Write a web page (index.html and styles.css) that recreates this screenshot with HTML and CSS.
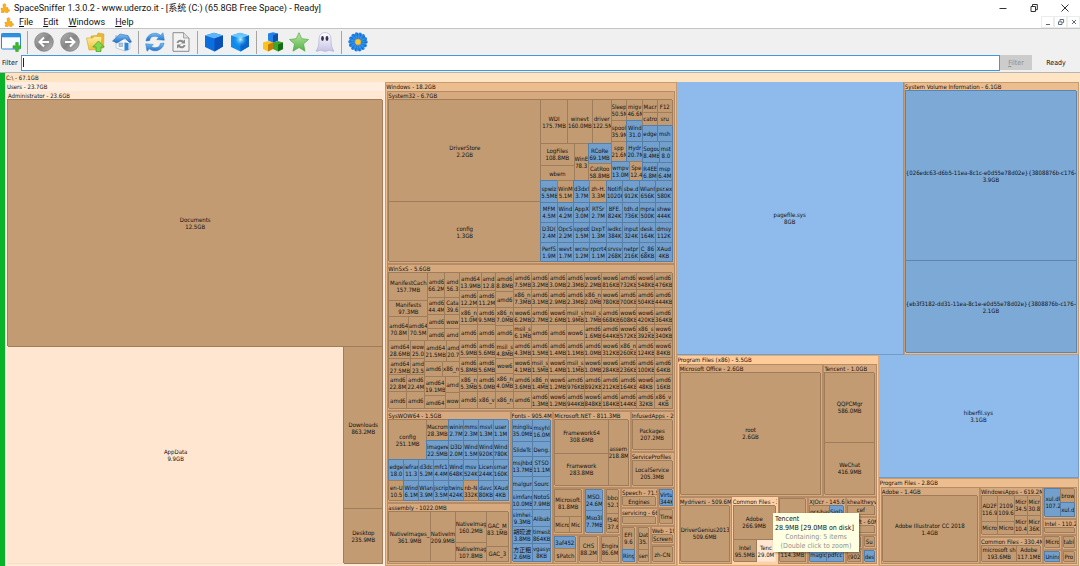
FILE: index.html
```html
<!DOCTYPE html>
<html lang="en">
  <head>
    <meta charset="UTF-8" />
    <title>SpaceSniffer</title>
    <link rel="stylesheet" href="styles.css">
  </head>
  <body>
    <svg class="defs" aria-hidden="true">
      <defs>
        <linearGradient id="gray" x1="0" y1="0" x2="1" y2="1">
          <stop offset="0" stop-color="#b5b5b5" /><stop offset="0.5" stop-color="#858585" /><stop offset="1" stop-color="#b8b8b8" />
        </linearGradient>
        <linearGradient id="gold" x1="0" y1="0" x2="0" y2="1">
          <stop offset="0" stop-color="#fff0a0" /><stop offset="1" stop-color="#efbf38" />
        </linearGradient>
        <linearGradient id="sky" x1="0" y1="0" x2="0" y2="1">
          <stop offset="0" stop-color="#7cc0f5" /><stop offset="1" stop-color="#1f6fd0" />
        </linearGradient>
        <linearGradient id="leaf" x1="0" y1="0" x2="0" y2="1">
          <stop offset="0" stop-color="#b9ea9c" /><stop offset="1" stop-color="#54b04a" />
        </linearGradient>
        <linearGradient id="mist" x1="0" y1="0" x2="0" y2="1">
          <stop offset="0" stop-color="#ffffff" /><stop offset="1" stop-color="#c6c2e6" />
        </linearGradient>
        <radialGradient id="glow">
          <stop offset="0" stop-color="#b8f6ff" /><stop offset="1" stop-color="#1f9df2" stop-opacity="0" />
        </radialGradient>
        <symbol id="puzzle" viewBox="0 0 10 10">
          <path d="M1 5.200h2.200c.6 0 .3-.8.1-1.300C2.700 2.200 3 .7 4.400.7s1.900 1.500 1.200 2.900c-.3.600-.2 1 .4 1h2v1.700c0 .6.400.5.800.3.900-.3 1.200 1.700.1 1.800-.7 0-1-.2-1 .4v.8H5.600c.3-1.400-1.700-1.500-1.500 0H1.300V7.800c1.200 0 1-1.400-.3-1.100z" fill="#f9b21e" stroke="#dd8b13" stroke-width=".5" />
        </symbol>
      </defs>
    </svg>

    <header class="titlebar">
      <svg class="app-icon"><use href="#puzzle" /></svg>
      <span class="caption">SpaceSniffer 1.3.0.2 - www.uderzo.it - [系统 (C:) (65.8GB Free Space) - Ready]</span>
      <div class="window-buttons">
        <button aria-label="Minimize"><svg viewBox="0 0 10 10"><path d="M1.500 5.500h7" /></svg></button>
        <button aria-label="Restore"><svg viewBox="0 0 10 10"><path d="M2 3.500h4.500V8.500H2zM3.500 3V1.500h4.800v5.200H7" /></svg></button>
        <button aria-label="Close"><svg viewBox="0 0 10 10"><path d="M1.500 1.500l7 7M8.500 1.500l-7 7" /></svg></button>
      </div>
    </header>

    <nav class="menubar">
      <svg class="app-icon"><use href="#puzzle" /></svg>
      <button><u>F</u>ile</button>
      <button><u>E</u>dit</button>
      <button><u>W</u>indows</button>
      <button><u>H</u>elp</button>
      <div class="child-buttons">
        <button aria-label="Minimize view"><svg viewBox="0 0 10 10"><path d="M3 7.500h4" /></svg></button>
        <button aria-label="Restore view"><svg viewBox="0 0 10 10"><path d="M2.500 4.800h3.500v2.700H2.500zM4 4V2.500h3.600v3H6.500" /></svg></button>
        <button aria-label="Close view"><svg viewBox="0 0 10 10"><path d="M3 3l4 4M7 3l-4 4" /></svg></button>
      </div>
    </nav>

    <div class="toolbar">
      <button aria-label="New view">
        <svg viewBox="0 0 20 20"><rect x=".5" y="1.500" width="19" height="15.500" rx="1" fill="#f8fbff" stroke="#2c86d6" /><path d="M.5 1.500h19v3.800H.5z" fill="#2f8fe0" /><path d="M14.700 10.500h2.600v3.200h2.700v2.600h-2.700v3.200h-2.600v-3.200h-2.700v-2.600h2.700z" fill="#3dbb2d" stroke="#22901b" stroke-width=".5" /></svg>
      </button>
      <span class="sep"></span>
      <button aria-label="Back">
        <svg viewBox="0 0 20 20"><circle cx="10" cy="10" r="9.300" fill="url(#gray)" stroke="#777" stroke-width=".7" /><path d="M15 10H6M10 5.500L5.500 10l4.500 4.500" fill="none" stroke="#fff" stroke-width="2" /></svg>
      </button>
      <button aria-label="Forward">
        <svg viewBox="0 0 20 20"><circle cx="10" cy="10" r="9.300" fill="url(#gray)" stroke="#777" stroke-width=".7" /><path d="M5 10h9M10 5.500l4.500 4.500-4.500 4.500" fill="none" stroke="#fff" stroke-width="2" /></svg>
      </button>
      <button aria-label="Parent folder">
        <svg viewBox="0 0 20 20"><path d="M5 4l6-.5 1-2.500 6 1-.5 14L5 17z" fill="#e9b933" stroke="#c99a28" stroke-width=".5" /><path d="M.5 6l6 0 2-1.800 7.500.6-1.500 12.500L3 18z" fill="url(#gold)" stroke="#d2a42f" stroke-width=".6" /><path d="M12.500 9l5.800 6h-3.300v4.500H10V15H6.700z" fill="#83d84b" stroke="#3d9c2c" stroke-width=".7" /></svg>
      </button>
      <button aria-label="Home">
        <svg viewBox="0 0 20 20"><path d="M4 9l8-2 6 3v7l-5 2-9-3z" fill="#f4f6fa" stroke="#9aa9ba" stroke-width=".5" /><path d="M3 3h2.500v4H3z" fill="#c5d2de" /><path d="M.5 9L8 2l8 1.500 3.500 6.500-2 .5-4.500-4.500-8 5z" fill="url(#sky)" stroke="#275f9d" stroke-width=".5" /><path d="M12.500 10.500l4 .5v7l-4 .7z" fill="#2f85d8" /><path d="M7 11h3.500v3.500H7z" fill="#a5cdf0" stroke="#587a9b" stroke-width=".4" /></svg>
      </button>
      <span class="sep"></span>
      <button aria-label="Rescan">
        <svg viewBox="0 0 20 20"><path d="M1 9C1.500 2.500 10-1.500 15.500 3.200L18 .8l1.300 7.400-7.600-.6 2.100-2.100C9.500 2.800 4.500 5 4.800 8.500z" fill="url(#sky)" stroke="#2a78bd" stroke-width=".5" /><path d="M19 11c-.5 6.500-9 10.500-14.500 5.800L2 19.200.7 11.800l7.600.6-2.100 2.100C10.500 17.200 15.500 15 15.200 11.500z" fill="url(#sky)" stroke="#2a78bd" stroke-width=".5" /></svg>
      </button>
      <button aria-label="Rescan this folder">
        <svg viewBox="0 0 20 20"><path d="M2 .7h10.500L18 6v13.300H2z" fill="#f3f3f3" stroke="#8c8c8c" /><path d="M12.500.7V6H18" fill="#ddd" stroke="#8c8c8c" stroke-width=".7" /><path d="M5.500 11c.8-3.500 4.500-4.300 6.800-2.200L14 7.500v4h-4l1-1.300c-1.500-1-3.200-.5-3.500.8zM14.500 13c-.8 3.500-4.500 4.300-6.800 2.200L6 16.500v-4h4l-1 1.300c1.500 1 3.200.5 3.500-.8z" fill="#8a8a8a" /></svg>
      </button>
      <span class="sep"></span>
      <button aria-label="Less detail">
        <svg viewBox="0 0 20 20"><path d="M1 3.500L10 .8l9 2.700v11L10.500 19.500 1 15z" fill="#0c6edc" /><path d="M1 3.500L10 .8l9 2.700-8.500 3z" fill="#5db5fa" /><path d="M10.500 6.500L19 3.500v11l-8.500 5z" fill="#0a50b9" /></svg>
      </button>
      <button aria-label="More detail">
        <svg viewBox="0 0 20 20"><path d="M1 3.500L10 .8l9 2.700v11L10.500 19.500 1 15z" fill="#118be9" /><path d="M1 3.500L10 .8l9 2.700-8.500 3z" fill="#73cbfc" /><path d="M10.500 6.500L19 3.500v11l-8.500 5z" fill="#0864cc" /><circle cx="10.500" cy="7.500" r="7" fill="url(#glow)" /></svg>
      </button>
      <span class="sep"></span>
      <button aria-label="File classes">
        <svg viewBox="0 0 20 20"><path d="M5 1.500l5-1.300 5 1.300v7l-5 2.300-5-2.300z" fill="#2382e6" /><path d="M10 3.200l5-1.700v7l-5 2.300z" fill="#0d51ae" /><path d="M0 10.500L5 9l5 1.500v6.500l-5 2.500-5-2.500z" fill="#f9c320" /><path d="M5 12.500l5-2v6.500l-5 2.500z" fill="#c27e09" /><path d="M10 10.500L15 9l5 1.500v6.500l-5 2.500-5-2.500z" fill="#3ea72c" /><path d="M15 12.500l5-2v6.500l-5 2.500z" fill="#146d15" /></svg>
      </button>
      <button aria-label="Favourites">
        <svg viewBox="0 0 20 20"><path d="M10 .7l2.800 6 6.700.8-5 4.500 1.500 7.200-6-3.700-6 3.700L5.500 12l-5-4.500 6.700-.8z" fill="url(#leaf)" stroke="#57a64c" stroke-width=".7" /></svg>
      </button>
      <button aria-label="Show hidden">
        <svg viewBox="0 0 20 20"><path d="M4 8C4 3 6 .7 10 .7S16 3 16 8c0 5 1 9 3 11-2 .7-3-.7-4.500-.7S12 19.500 10 19.300s-3-1-4.500-1S2.500 20 1 19c2-2.500 3-6 3-11z" fill="url(#mist)" stroke="#aaa5cf" stroke-width=".6" /><ellipse cx="7.500" cy="6.500" rx="1.400" ry="2.400" fill="#37324d" /><ellipse cx="12" cy="6.500" rx="1.400" ry="2.400" fill="#37324d" /></svg>
      </button>
      <span class="sep"></span>
      <button aria-label="About">
        <svg viewBox="0 0 20 20"><circle cx="10" cy="10" r="8" fill="#2f93ee" /><circle cx="10" cy="10" r="8" fill="none" stroke="#2585e4" stroke-width="3.600" stroke-linecap="round" stroke-dasharray="0 3.590" /><circle cx="10" cy="10" r="6" fill="none" stroke="#1263c4" stroke-width="6" stroke-dasharray=".5 2.190" /><circle cx="10" cy="10" r="2.900" fill="#ffc629" stroke="#e29a16" stroke-width=".5" /></svg>
      </button>
    </div>

    <form class="filterbar">
      <label for="filter">Filter</label>
      <input type="text" id="filter" autofocus />
      <button type="button" disabled><u>F</u>ilter</button>
      <span class="status">Ready</span>
    </form>

    <main class="view">
      <div class="progress"></div>
      <div class="map" id="map"></div>
      <div class="tip">
        <div>Tencent</div>
        <div>28.9MB [29.0MB on disk]</div>
        <div class="hint">Containing: 5 items</div>
        <div class="hint">(Double click to zoom)</div>
      </div>
    </main>
    <script src="script.js"></script>
  </body>
</html>
```
FILE: styles.css
```css
body {
  margin: 0;
  height: 100vh;
  display: flex;
  flex-direction: column;
  overflow: hidden;
  background: #fff;
  color: #111;
  font-family: Roboto, "Noto Sans CJK SC", sans-serif;
  font-size: 9px;
}
button {
  background: none;
  border: none;
  padding: 0;
  font: inherit;
  color: inherit;
}
.defs {
  position: absolute;
  width: 0;
  height: 0;
}
.titlebar, .menubar {
  display: flex;
  align-items: center;
  flex: none;
}
.titlebar {
  height: 15px;
}
.menubar {
  height: 13px;
  padding-left: 4px;
  border-bottom: 1px solid #c4c4c4;
}
.menubar > button {
  margin-right: 10px;
}
.app-icon {
  width: 10px;
  height: 10px;
}
.titlebar .app-icon {
  margin-right: 4px;
}
.menubar .app-icon {
  margin-right: 5px;
}
.window-buttons, .child-buttons {
  display: flex;
  margin-left: auto;
}
.window-buttons button {
  width: 31px;
  height: 15px;
}
.window-buttons svg, .child-buttons svg {
  width: 10px;
  height: 10px;
  display: block;
  margin: auto;
  fill: none;
  stroke: #333;
}
.child-buttons button {
  width: 13px;
  height: 12px;
  border: 1px solid #ececec;
}
.child-buttons svg {
  stroke: #5b6b7c;
}
.toolbar {
  display: flex;
  align-items: center;
  flex: none;
  height: 26px;
  margin-left: -2px;
  background: #f0f0f0;
}
.toolbar button {
  width: 26px;
  height: 20px;
}
.toolbar svg {
  width: 20px;
  height: 20px;
  display: block;
  margin: auto;
}
.toolbar .sep {
  width: 1px;
  height: 23px;
  margin: 0 3px;
  background: #a5a5a5;
}
.filterbar {
  display: flex;
  align-items: stretch;
  flex: none;
  height: 16px;
  padding-bottom: 1px;
  background: #f0f0f0;
  border-bottom: 1px solid #b5b5b5;
  font-family: "DejaVu Sans Condensed", "DejaVu Sans", sans-serif;
  font-size: 7px;
  line-height: 16px;
}
.filterbar label {
  width: 19px;
  padding-left: 2px;
}
.filterbar input {
  flex: 1;
  min-width: 0;
  border: 1px solid #4298dc;
  padding: 0 1px;
  outline: none;
  font-size: 9px;
  caret-color: transparent;
  background: linear-gradient(#222, #222) 1px 2px / 1px 9px no-repeat #fff;
}
.filterbar button {
  width: 32px;
  margin-bottom: 1px;
  background: #ccc;
  color: #8f8f8f;
}
.filterbar .status {
  width: 48px;
  text-align: center;
}
.view {
  position: relative;
  display: flex;
  flex: 1;
  min-height: 0;
}
.progress {
  width: 5px;
  background: #08b32a;
}
.map {
  flex: 1;
  min-width: 0;
  display: grid;
  font-family: "DejaVu Sans Condensed", "DejaVu Sans", "Noto Sans CJK SC", sans-serif;
  font-size: 6px;
  line-height: 7px;
}
.split {
  display: grid;
  min-width: 0;
  min-height: 0;
}
.folder {
  display: flex;
  flex-direction: column;
  min-width: 0;
  min-height: 0;
  box-sizing: border-box;
  overflow: hidden;
  background: #d7a97e;
  border: 1px solid #b58c65;
}
.folder > .title {
  flex: none;
  height: 8px;
  line-height: 8px;
  white-space: nowrap;
  overflow: hidden;
}
.folder > .split {
  flex: 1;
  padding: 0 1px 1px 1px;
}
.group > .split {
  padding-top: 1px;
}
.root, .user, .admin { border: none; }
.root { background: #ffe4c4; }
.user { background: #ffeedf; }
.admin { background: #ffe7d2; }
.root > .title, .user > .title, .admin > .title {
  height: 9px;
  line-height: 9px;
  padding-left: 1px;
}
.root > .split { padding-bottom: 0; }
.windows { background: #ebbd8f; border-color: #c69b70; }
.program { background: #ffcb99; border-color: #dbab7d; }
.hover { background: #ffd0a3; border-color: #ffd0a3; }
.tile {
  display: flex;
  flex-direction: column;
  justify-content: center;
  min-width: 0;
  min-height: 0;
  box-sizing: border-box;
  overflow: hidden;
  text-align: center;
  background: #c39b72;
  border: solid #a07d5a;
  border-width: 0 1px 1px 0;
  box-shadow: -1px -1px 0 #a07d5a;
}
.tile > div {
  white-space: nowrap;
  flex: none;
  min-height: 7px;
}
.file { background: #729fcc; border-color: #557fa8; box-shadow: -1px -1px 0 #557fa8; }
.big { background: #8ebbeb; border-color: #719cca; box-shadow: none; }
.volume { background: #7da9d7; border-color: #5c84ae; box-shadow: -1px -1px 0 #5c84ae; }
.open { background: #ffe6d0; border-color: #f8dfc8; box-shadow: none; }
.tip {
  position: absolute;
  right: 221px;
  bottom: 14px;
  width: 86px;
  height: 39px;
  box-sizing: border-box;
  padding: 2px;
  background: #ffffe1;
  box-shadow: 1px 1px 2px rgba(0,0,0,0.4);
  font-family: "DejaVu Sans Condensed", "DejaVu Sans", sans-serif;
  font-size: 7px;
  line-height: 9px;
  white-space: nowrap;
}
.tip .hint {
  color: #929292;
  text-align: center;
}
```
FILE: script.js
```js
// A node is { weight, dir, kids } for a split, plus title for a folder.
// Weights are relative to the siblings in the same split.
function tile(weight, name, size, kind) {
  return { weight, name, size, kind: kind || "" };
}
function file(weight, name, size) {
  return tile(weight, name, size, "file");
}
function row(weight, ...kids) {
  return { weight, dir: "columns", kids };
}
function col(weight, ...kids) {
  return { weight, dir: "rows", kids };
}
function folder(weight, title, inner, kind) {
  return { weight, title, kids: [inner], dir: "rows", kind: kind || "" };
}
// "name|size, *name|size": a star marks a file, equal weights unless given
function cells(weight, text, weights) {
  const kids = text.split(",").map((part, i) => {
    const [name, size] = part.trim().split("|");
    const w = weights ? weights[i] : 1;
    return name[0] === "*" ? file(w, name.slice(1), size) : tile(w, name, size);
  });
  return row(weight, ...kids);
}
function stack(weight, text, weights) {
  return { ...cells(weight, text, weights), dir: "rows" };
}

const system32 = folder(174, "System32 - 6.7GB", row(1,
  stack(460, "DriverStore|2.2GB, config|1.3GB", [310, 182]),
  col(398,
    row(247,
      col(213,
        cells(134, "WDI|175.7MB, winevt|160.0MB, driver|122.5MB", [81, 75, 57]),
        row(113,
          stack(101, "LogFiles|108.8MB, wbem", [65, 48]),
          tile(43, "WinE", "78.3"),
          stack(69, "*RCoRe|69.1MB, CatRoo|58.8MB", [61, 52])
        )
      ),
      col(96,
        cells(64, "Sleep|50.5M, migv|46.6M"),
        cells(62, "spool|35.9M, *Wind|31.0"),
        cells(61, "spp|21.6M, *Hydr|20.7M"),
        cells(60, "*wmpv|13.0M, Spe|12.4", [57, 39])
      ),
      col(89,
        cells(40, "Macr, F12"),
        cells(38, "catro, sru"),
        cells(48, "*edge, *msh"),
        cells(66, "*Sogou|8.4MB, *mst|8.0", [51, 38]),
        cells(55, "*R4EE|6.8MB, *msp|6.4M")
      )
    ),
    cells(65, "*spwiz|5.5MB, WinM|5.1M, *d3dx9|3.7M, zh-H.|3.3M, *Notifi|1020K, *sbe.d|912K, *WlanI|656K, *psr.ex|580K"),
    cells(61, "*MFM|4.5M, *Wind|4.2M, *AppX|3.0M, *RTSr|2.7M, *BFE.|824K, *tdh.d|736K, *mpra|500K, *shwe|444K"),
    cells(60, "*D3D(|2.4M, *OpcS|2.2M, *sppob|1.5M, *DxpT|1.3M, *iedkc|384K, *input|324K, *desk.|164K, *dmsy|112K"),
    cells(59, "*PerfS|1.9M, *wevt|1.7M, *wcnv|1.2M, *rpcrt4|1.1M, *srvsv|268K, *netpr|216K, *C_86|68KB, *XAud|4KB")
  )
));

const winsxs = folder(147, "WinSxS - 5.6GB", col(1,
  row(206,
    col(118,
      tile(83, "ManifestCach", "157.7MB"),
      tile(50, "Manifests", "97.3MB"),
      cells(73, "amd64|70.8M, amd64|70.5M")
    ),
    col(97,
      cells(76, "amd6|66.2M, amd|56.3", [52, 45]),
      cells(52, "amd6|44.4M, Cata|39.6", [52, 45]),
      cells(41, "amd6, wow", [52, 45]),
      cells(37, "amd6, amd", [52, 45])
    ),
    col(109,
      cells(54, "amd64|13.9MB, amd|12.8", [65, 44]),
      cells(52, "amd6|12.2M, amd6|11.2M"),
      cells(50, "x86_n|11.0M, amd6|9.5MB"),
      cells(50, "amd6, amd6")
    ),
    stack(54, "amd6|8.8MB, amd6, x86_n|7.0MB, amd6", [57, 49, 53, 47]),
    col(480,
      cells(52, "amd6|7.5MB, amd6|3.2MB, amd6|3.0MB, amd6|2.3MB, wow6|2.2MB, wow6|816KB, amd6|732KB, wow6|548KB, amd6|476KB"),
      cells(52, "x86_n|7.3MB, amd6|3.1MB, amd6|2.9MB, amd6|2.3MB, x86_n|2.0MB, wow6|780KB, amd6|700KB, amd6|504KB, amd6|444KB"),
      cells(52, "wow6|6.2MB, amd6|2.7MB, wow6|2.6MB, msil_s|1.9MB, msil_s|1.7MB, amd6|668KB, wow6|608KB, wow6|420KB, amd6|364KB"),
      cells(50, "msil_s|6.1MB, amd6, amd6, wow6, amd6|1.6MB, amd6|644KB, wow6|572KB, x86_s|392KB, wow6|340KB")
    )
  ),
  row(205,
    col(109,
      cells(54, "amd64|28.6MB, wow|25.0", [67, 42]),
      cells(50, "amd64|27.5MB, amd|23.5", [67, 42]),
      cells(52, "amd6|22.8M, amd6|22.4M"),
      cells(49, "amd6, amd6")
    ),
    col(106,
      cells(62, "amd64|21.5MB, amd|20.7", [66, 40]),
      cells(47, "amd6, x86_n"),
      row(96,
        stack(62, "amd64|19.1MB, amd64", [59, 37]),
        stack(44, "amd, wow")
      )
    ),
    col(109,
      cells(51, "amd6|5.9MB, amd6|5.6MB"),
      cells(51, "amd6|5.8MB, amd6|5.6MB"),
      cells(52, "x86_n|5.3MB, amd6|5.0MB"),
      cells(51, "amd6, x86_v")
    ),
    stack(54, "msil_s|4.8MB, wow6, x86_n|4.0MB, x86_n", [54, 46, 54, 51]),
    col(480,
      cells(51, "amd6|4.3MB, amd6|1.5MB, amd6|1.4MB, amd6|1.1MB, amd6|1.0MB, wow6|312KB, x86_n|260KB, amd6|124KB, wow6|84KB"),
      cells(51, "wow6|4.1MB, msil_s|1.5MB, wow6|1.4MB, msil_s|1.1MB, wow6|1.0MB, wow6|284KB, amd6|236KB, amd6|100KB, amd6|64KB"),
      cells(52, "amd6|3.6MB, x86_n|1.4MB, wow6|1.2MB, amd6|976KB, amd6|892KB, amd6|212KB, amd6|164KB, wow6|48KB, amd6|16KB"),
      cells(51, "amd6, amd6|1.3MB, wow6|1.2MB, amd6|944KB, wow6|848KB, amd6|184KB, amd6|144KB, amd6|32KB, x86_v|4KB")
    )
  )
));

const syswow = folder(93, "SysWOW64 - 1.5GB", col(1,
  row(125,
    tile(115, "config", "251.1MB"),
    stack(68, "Macrom|28.3MB, *imagere|22.5MB", [65, 60]),
    col(182,
      cells(65, "*winin|2.7M, *mms|2.3M, *msvl|1.3M, *user|1.1M"),
      cells(60, "*D3D|2.0M, *Wind|1.5M, *Wind|920K, *Wind|780K")
    )
  ),
  cells(64, "*edge|18.0, *iefran|11.3, *d3dc|5.2M, *mfc1|4.4M, *Wind|648K, *msv|524K, *Licen|244K, *smar|160K"),
  cells(61, "en-U|10.5, *Wind|6.1M, *Wlan|3.9M, *jscrip|3.5M, *twinu|424K, nb-N|332K, *davc|80KB, *XAud|4KB")
));

const assembly = folder(61, "assembly - 1022.0MB", row(1,
  tile(127, "NativeImages_", "361.9MB"),
  tile(76, "NativeIm", "209.9MB"),
  stack(96, "NativeImag|160.2MB, NativeImag|107.8MB", [93, 59]),
  stack(66, "GAC_M|83.1MB, GAC_3", [106, 46])
));

const fonts = folder(43, "Fonts - 905.4MB", row(1,
  stack(64, "*mingliu|35.0MB, *SlideTc, *msjhbd|13.7MB, *malgun, *simfang|10.0MB, *simhei.|9.3MB, *胡晓波|3.8MB, *方正粗|2.6MB", [67, 47, 58, 45, 55, 52, 53, 53]),
  stack(58, "*msyhl|16.0M, *Deng., *STSO|11.1M, *Sourc, *NotoS|7.9MB, *Alibab, *timesb|864KB, *vgasys|8KB", [69, 45, 58, 45, 57, 50, 51, 55])
));

const windowsRest = col(122,
  row(230,
    folder(232, "Microsoft.NET - 811.3MB", row(1,
      stack(163, "Framework64|308.6MB, Framework|283.8MB", [104, 96]),
      tile(61, "assem", "218.8M")
    )),
    col(132,
      folder(124, "InfusedApps - 207.2MB", tile(1, "Packages", "207.2MB")),
      folder(106, "ServiceProfiles", tile(1, "LocalService", "205.3MB"))
    )
  ),
  row(228,
    col(203,
      row(140,
        folder(92, "", col(1, tile(83, "Microsoft.", "81.8MB"), cells(49, "Micro, Mic", [47, 37]))),
        folder(64, "", stack(1, "*MSO.|24.6M, *Mso3l|7.7MB")),
        folder(47, "", stack(1, "bbcc|52.1, f54C|37.6", [75, 57]))
      ),
      row(88,
        folder(75, "", stack(1, "*3af452., $Patch")),
        folder(64, "", tile(1, "CHS", "88.2M")),
        folder(64, "", tile(1, "Engine", "86.6M"))
      )
    ),
    col(161,
      row(114,
        col(111,
          folder(62, "Speech - 71.5MB", tile(1, "Engines")),
          folder(52, "servicing - 66MB", tile(1, ""))
        ),
        col(50,
          folder(62, "", file(1, "Virtu", "344K")),
          folder(52, "", tile(1, "Time"))
        )
      ),
      row(114,
        folder(47, "", stack(1, "EFI|9.6, *Ring", [70, 38])),
        folder(43, "", stack(1, "Dat|35., serv", [70, 38])),
        col(71,
          folder(58, "Web - 19MB", tile(1, "Screen")),
          folder(56, "", tile(1, "zh-CN"))
        )
      )
    )
  )
);

const windows = folder(291, "Windows - 18.2GB", col(1,
  system32,
  winsxs,
  row(154, col(124, syswow, assembly), fonts, windowsRest)
), "windows");

const users = folder(379, "Users - 23.7GB", folder(1, "Administrator - 23.6GB", col(1,
  tile(247, "Documents", "12.5GB"),
  row(217,
    tile(336, "AppData", "9.9GB", "open"),
    stack(39, "Downloads|863.2MB, Desktop|235.9MB", [162, 55])
  )
), "admin"), "user");

const programX86 = folder(202, "Program Files (x86) - 5.5GB", col(1,
  row(400,
    folder(437, "Microsoft Office - 2.6GB", tile(1, "root", "2.6GB")),
    folder(161, "Tencent - 1.0GB", stack(1, "QQPCMgr|586.0MB, WeChat|416.9MB", [212, 158]))
  ),
  row(203,
    folder(160, "Mydrivers - 509.6MB", tile(1, "DriverGenius2013", "509.6MB")),
    folder(139, "Common Files - 391MB", col(1,
      tile(105, "Adobe", "266.9MB"),
      row(67, tile(72, "Intel", "95.5MB"), tile(57, "Tenc", "29.0M", "open"))
    ), "hover"),
    folder(92, "", col(1, tile(126, ""), tile(67, "", "114.3MB"))),
    folder(114, "XJOcr - 145.6MB", col(1,
      cells(40, "ocr-bas, *SigD", [61, 45]),
      cells(92, ", *"),
      cells(40, "*magicl, *pdfcc")
    )),
    col(93,
      folder(62, "khealtheyv", tile(1, "cef")),
      folder(55, "&Soft - 60MB", tile(1, "")),
      row(42, folder(50, "", tile(1, "c")), folder(42, "", tile(1, "Su"))),
      row(44, folder(50, "", tile(1, "(902")), folder(42, "", file(1, "desl")))
    )
  )
), "program");

const programFiles = folder(88, "Program Files - 2.8GB", row(1,
  folder(298, "Adobe - 1.4GB", tile(1, "Adobe Illustrator CC 2018", "1.4GB")),
  col(191,
    folder(152, "WindowsApps - 619.2MB", row(1,
      col(101, cells(84, "AD2F|116.9, 2109|109.6"), cells(40, "Micro, Micro")),
      col(82, cells(64, "Micr|34.5, Micr|30.8"), cells(60, "Micr|10.4, Micr|36K"))
    )),
    folder(84, "Common Files - 330.4MB", cells(1, "microsoft sh|193.6MB, Adobe|117.1MB", [109, 74]))
  ),
  col(101,
    folder(97, "", row(1, file(49, "xul.dl", "107.2"), stack(43, "brow, *xul.d"))),
    folder(51, "Intel - 110.2MB", tile(1, "")),
    row(44, folder(53, "", tile(1, "Micro")), folder(45, "", tile(1, "tabl"))),
    row(44, folder(53, "", file(1, "Unins")), folder(45, "", tile(1, "Pro")))
  )
), "windows");

const volume = "-e0d55e78d02e}{3808876b-c176-4e48-b7ae-04046e6cc752}";
const drive = folder(1, "C:\\ - 67.1GB", row(1,
  users,
  windows,
  col(402,
    row(273,
      tile(227, "pagefile.sys", "8GB", "big"),
      folder(175, "System Volume Information - 6.1GB", col(1,
        tile(170, "{026edc63-d6b5-11ea-8c1c" + volume, "3.9GB", "volume"),
        tile(92, "{eb3f3182-dd31-11ea-8c1e" + volume, "2.1GB", "volume")
      ), "windows")
    ),
    row(211,
      programX86,
      col(200, tile(123, "hiberfil.sys", "3.1GB", "big"), programFiles)
    )
  )
), "root");

function div(className, text) {
  const el = document.createElement("div");
  el.className = className;
  if (text) el.textContent = text;
  return el;
}

function build(node) {
  if (!node.kids) {
    const el = div("tile " + node.kind);
    if (node.name || node.size) el.append(div("name", node.name));
    if (node.size) el.append(div("size", node.size));
    return el;
  }
  const split = div("split");
  const tracks = node.kids.map((kid) => `minmax(0, ${kid.weight}fr)`).join(" ");
  split.style[node.dir === "rows" ? "gridTemplateRows" : "gridTemplateColumns"] = tracks;
  node.kids.forEach((kid) => split.append(build(kid)));
  if (node.title === undefined) return split;

  const el = div("folder " + node.kind + (node.title ? "" : " group"));
  if (node.title) el.append(div("title", node.title));
  el.append(split);
  return el;
}

document.getElementById("map").append(build(drive));
```
